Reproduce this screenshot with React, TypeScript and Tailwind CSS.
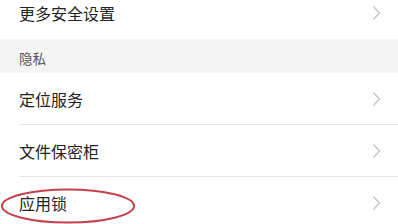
import React from 'react';

const font = { fontFamily: '"Noto Sans CJK SC", "Noto Sans", sans-serif' };

function Chevron() {
  return (
    <svg width="9" height="16" viewBox="0 0 9 16" className="shrink-0">
      <path d="M1.5 1.5 L7.5 8 L1.5 14.5" fill="none" stroke="#c4c4c4" strokeWidth="1.3" />
    </svg>
  );
}

function Row({ label, divider = true }: { label: string; divider?: boolean }) {
  return (
    <div className="pl-[19px] bg-white">
      <div
        className={
          'h-[52px] flex items-center pr-[17px] ' + (divider ? 'border-b border-[#e6e6e6]' : '')
        }
      >
        <span className="flex-1 text-[16px] text-[#222]">{label}</span>
        <Chevron />
      </div>
    </div>
  );
}

export default function App() {
  return (
    <div className="w-[398px] h-[224px] overflow-hidden bg-white relative" style={font}>
      <div className="-mt-[13px]">
        <Row label="更多安全设置" divider={false} />
        <div className="h-[34px] bg-[#f4f4f4] flex items-center pl-[19px] pt-[4px]">
          <span className="text-[13.5px] text-[#555]">隐私</span>
        </div>
        <Row label="定位服务" />
        <Row label="文件保密柜" />
        <Row label="应用锁" divider={false} />
      </div>
      {/* red hand-drawn circle */}
      <svg className="absolute left-0 top-[186px]" width="140" height="40" viewBox="0 0 140 40">
        <ellipse cx="68" cy="20" rx="66" ry="16.5" fill="none" stroke="#c4424c" strokeWidth="2" />
      </svg>
    </div>
  );
}
